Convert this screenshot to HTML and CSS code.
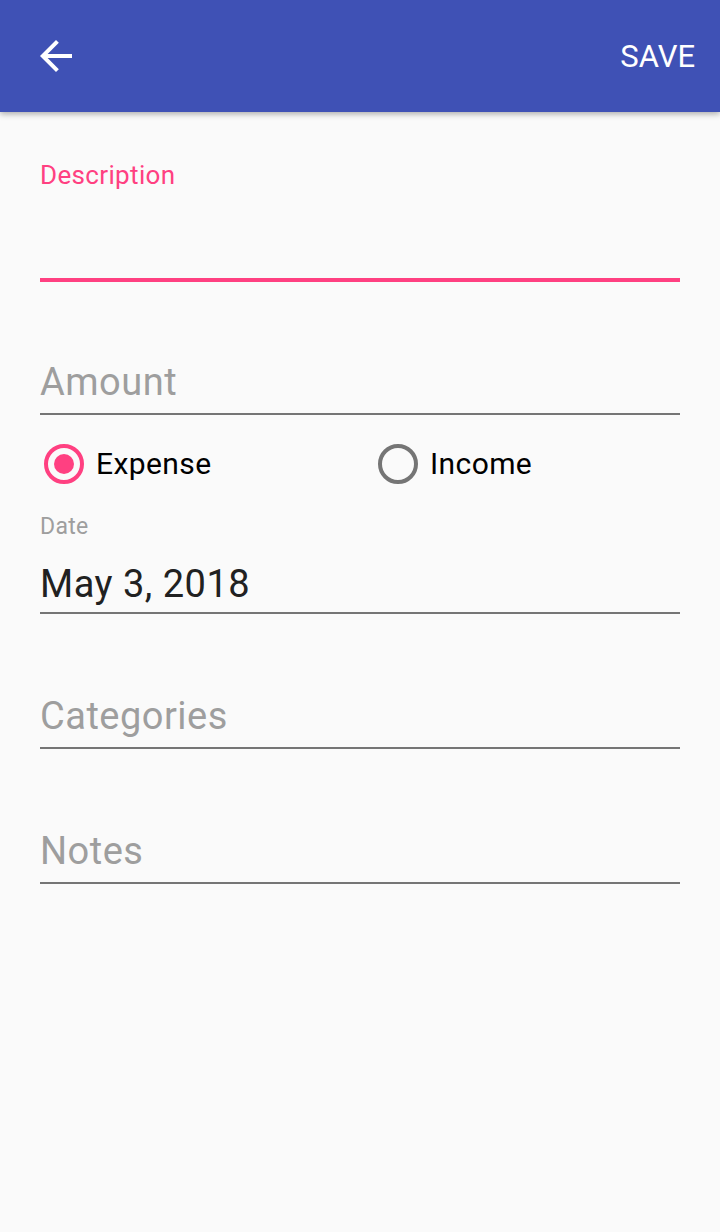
FILE: index.html
```html
<!DOCTYPE html>
<html lang="en">
<head>
<meta charset="utf-8">
<title>Add transaction</title>
<link rel="stylesheet" href="styles.css">
</head>
<body>
<header class="toolbar">
  <svg class="back" viewBox="0 0 24 24" width="48" height="48" aria-label="Back">
    <path d="M20 11H7.83l5.59-5.59L12 4l-8 8 8 8 1.41-1.41L7.83 13H20v-2z" fill="#fff"/>
  </svg>
  <span class="save">SAVE</span>
</header>
<main class="form">
  <div class="field field-desc">
    <div class="float-label">Description</div>
    <div class="desc-input"></div>
  </div>
  <div class="field field-amount">
    <div class="hint">Amount</div>
  </div>
  <div class="radios">
    <div class="radio">
      <span class="circle checked"><span class="dot"></span></span>
      <span class="radio-text">Expense</span>
    </div>
    <div class="radio">
      <span class="circle"></span>
      <span class="radio-text">Income</span>
    </div>
  </div>
  <div class="date-label">Date</div>
  <div class="field field-date">
    <div class="value">May 3, 2018</div>
  </div>
  <div class="field field-cat">
    <div class="hint">Categories</div>
  </div>
  <div class="field field-notes">
    <div class="hint">Notes</div>
  </div>
</main>
</body>
</html>
```
FILE: styles.css
```css
html, body {
  margin: 0;
  padding: 0;
}
body {
  background: #fafafa;
  font-family: Roboto, "Noto Sans", sans-serif;
  width: 720px;
  height: 1232px;
  overflow: hidden;
}
.toolbar {
  height: 112px;
  background: #3f51b5;
  display: flex;
  align-items: center;
  justify-content: space-between;
  padding: 0 25px 0 32px;
  box-sizing: border-box;
  box-shadow: 0 2px 6px rgba(0, 0, 0, 0.32);
  position: relative;
  z-index: 1;
}
.back {
  display: block;
}
.save {
  color: #fff;
  font-size: 31px;
  line-height: 36px;
  margin-top: 2px;
}
.form {
  padding: 0 40px;
  display: flex;
  flex-direction: column;
}
.field {
  border-bottom: 2px solid #757575;
}
.field-desc {
  margin-top: 48px;
  border-bottom: 4px solid #ff4081;
}
.float-label {
  color: #ff4081;
  font-size: 26px;
  line-height: 30px;
  letter-spacing: 0.35px;
}
.desc-input {
  height: 88px;
}
.hint, .value {
  font-size: 38px;
  line-height: 46px;
  padding-bottom: 8px;
  color: #9e9e9e;
  letter-spacing: 0.5px;
}
.value {
  color: #212121;
  padding-bottom: 5px;
}
.field-amount {
  margin-top: 77px;
}
.radios {
  height: 98px;
  display: grid;
  grid-template-columns: 334px 1fr;
  align-items: center;
}
.radio {
  display: flex;
  align-items: center;
  padding-left: 4px;
  gap: 12px;
}
.circle {
  width: 40px;
  height: 40px;
  box-sizing: border-box;
  border: 4px solid #757575;
  border-radius: 50%;
  display: flex;
  align-items: center;
  justify-content: center;
}
.circle.checked {
  border-color: #ff4081;
}
.dot {
  width: 20px;
  height: 20px;
  border-radius: 50%;
  background: #ff4081;
}
.radio-text {
  font-size: 30px;
  line-height: 36px;
  color: #000;
  letter-spacing: 0.4px;
}
.date-label {
  color: #9e9e9e;
  font-size: 23px;
  line-height: 27px;
  letter-spacing: 0.3px;
}
.field-date {
  margin-top: 21px;
}
.field-cat {
  margin-top: 79px;
}
.field-notes {
  margin-top: 79px;
}
```
